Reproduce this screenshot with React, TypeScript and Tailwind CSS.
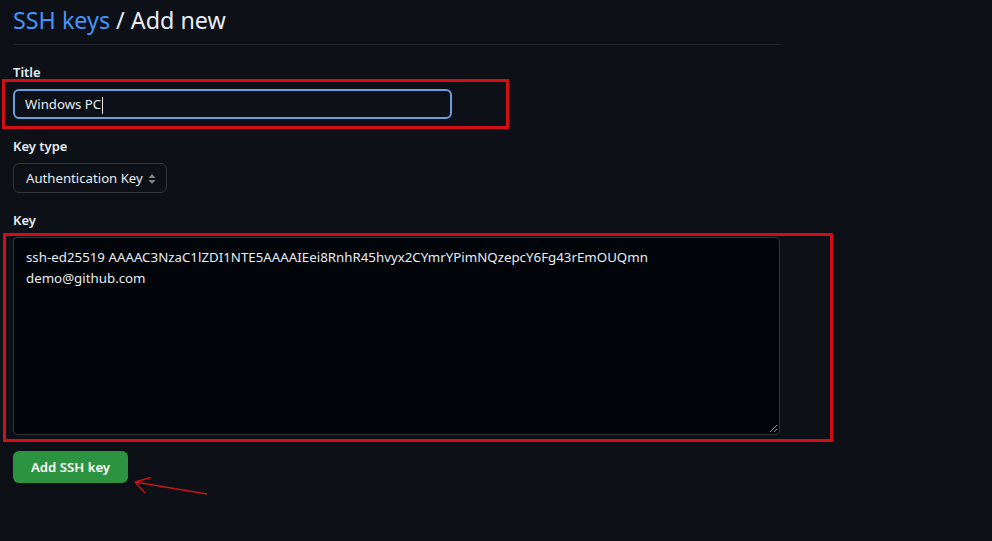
import { useState } from "react";

const KEY_TEXT =
  "ssh-ed25519 AAAAC3NzaC1lZDI1NTE5AAAAIEei8RnhR45hvyx2CYmrYPimNQzepcY6Fg43rEmOUQmn";

function UpDown() {
  return (
    <svg width="8" height="12" viewBox="0 0 8 12" className="text-[#7d8590]">
      <path d="M4 1 L7.5 5 H0.5 Z" fill="currentColor" />
      <path d="M4 11 L7.5 7 H0.5 Z" fill="currentColor" />
    </svg>
  );
}

function ResizeHandle() {
  return (
    <svg width="10" height="10" viewBox="0 0 10 10" className="absolute right-[1px] bottom-[1px]">
      <path d="M9 2 L2 9 M9 6 L6 9" stroke="#8b949e" strokeWidth="1" />
    </svg>
  );
}

export default function App() {
  const [title] = useState("Windows PC");

  return (
    <div className="min-h-[541px] bg-[#0d1117] px-[13px] text-[#e6edf3] font-['Noto_Sans','Open_Sans',sans-serif]">
      <div className="w-[768px] border-b border-[#21262d] pt-[2px] pb-[6px]">
        <h1 className="text-[23.3px] leading-[36px] font-normal">
          <span className="text-[#4493f8]">SSH keys</span> / Add new
        </h1>
      </div>

      <div className="mt-[17px] h-[20px] text-[13px] leading-[20px] font-semibold">Title</div>
      <div className="ml-[-11px] mt-[-3px] w-[507px] border-[3px] border-[#d10f16] py-[7px] pl-[8px]">
        <div className="flex h-[30px] w-[439px] items-center rounded-[6px] border-2 border-[#6a9fdc] bg-[#0d1117] px-[10px] pt-[2px] text-[13.2px]">
          {title}
          <span className="ml-[1px] h-[17px] w-px bg-[#e6edf3]" />
        </div>
      </div>

      <div className="mt-[7px] h-[20px] text-[13px] leading-[20px] font-semibold">Key type</div>
      <div className="mt-[7px] flex h-[30px] w-[154px] items-center justify-between rounded-[6px] border border-[#30363d] bg-[#0d1117] pl-[12px] pr-[10px] pt-[1px] text-[13.2px]">
        <span>Authentication Key</span>
        <UpDown />
      </div>

      <div className="mt-[17px] h-[20px] text-[13px] leading-[20px] font-semibold">Key</div>
      <div className="ml-[-10px] mt-[3px] w-[830px] border-[3px] border-[#d10f16] pt-[1px] pb-[4px] pl-[7px]">
        <div className="relative h-[198px] w-[767px] rounded-[4px] border border-[#30363d] bg-[#010409] px-[12px] pt-[9px] pb-[8px] text-[13.3px] leading-[21px]">
          <div>{KEY_TEXT}</div>
          <div>demo@github.com</div>
          <ResizeHandle />
        </div>
      </div>

      <div className="mt-[9px] flex items-start">
        <button className="h-[32px] w-[115px] rounded-[6px] bg-[#2c9340] pt-[2px] text-[13.2px] font-semibold text-white">
          Add SSH key
        </button>
        <svg width="80" height="22" viewBox="0 0 80 22" className="ml-[4px] mt-[25px]">
          <path d="M75 18 L3 6" stroke="#c8141b" strokeWidth="1.3" fill="none" />
          <path d="M3 6 L19 1.5 M3 6 L13 17" stroke="#c8141b" strokeWidth="1.3" fill="none" />
        </svg>
      </div>
    </div>
  );
}
